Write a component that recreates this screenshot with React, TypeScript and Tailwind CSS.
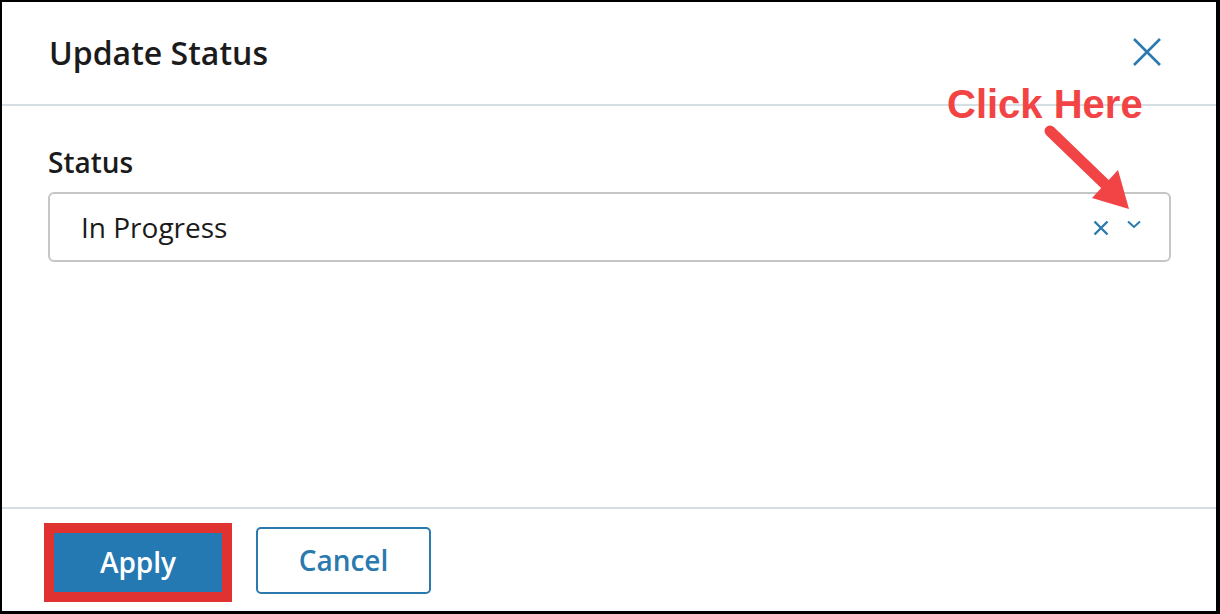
import React from 'react';

const font = { fontFamily: '"Open Sans", "Noto Sans", sans-serif' };

const Annotation: React.FC = () => (
  <div className="absolute left-0 top-0 w-[1220px] h-[614px] pointer-events-none">
    <span
      className="absolute left-[947px] top-[81px] text-[40px] leading-[46px] font-bold text-[#f24444]"
      style={{ fontFamily: '"Liberation Sans", Arial, sans-serif' }}
    >
      Click Here
    </span>
    <svg className="absolute left-0 top-0" width="1220" height="614">
      <line x1="1050" y1="131" x2="1108" y2="187" stroke="#f24444" strokeWidth="11" strokeLinecap="round" />
      <polygon points="1092,198 1118,170 1129,209" fill="#f24444" />
    </svg>
  </div>
);

export default function App() {
  return (
    <div className="relative w-[1220px] h-[614px] bg-white" style={font}>
      <div className="flex flex-col w-full h-full border-l-2 border-t-2 border-r-4 border-b-[3px] border-black">
        <div className="flex items-center justify-between h-[104px] pl-[47px] pr-[54px] border-b-2 border-[#d5dee2]">
          <h1 className="text-[32px] font-semibold text-[#1b1b1b] leading-none">Update Status</h1>
          <svg width="30" height="30" viewBox="0 0 30 30" className="-mt-[2px]">
            <path d="M2 2 L28 28 M28 2 L2 28" stroke="#2a7ab0" strokeWidth="2.6" />
          </svg>
        </div>
        <div className="flex-1 pl-[46px] pr-[45px] pt-[38px] border-b-2 border-[#d5dee2]">
          <label className="block text-[28px] font-semibold text-[#1b1b1b] leading-[36px]">Status</label>
          <div className="mt-[12px] flex items-center h-[70px] border-2 border-[#c6c6c6] rounded-[6px] pl-[31px] pr-[28px]">
            <span className="flex-1 text-[28px] text-[#1b1b1b]">In Progress</span>
            <svg width="16" height="16" viewBox="0 0 16 16" className="mr-[18px] mt-[1px]">
              <path d="M1.5 1.5 L14.5 14.5 M14.5 1.5 L1.5 14.5" stroke="#2a7ab0" strokeWidth="2.4" />
            </svg>
            <svg width="14" height="9" viewBox="0 0 14 9" className="-mt-[6px]">
              <path d="M1 1.5 L7 7 L13 1.5" stroke="#2a7ab0" strokeWidth="2" fill="none" />
            </svg>
          </div>
        </div>
        <div className="flex items-center h-[102px] pl-[42px] gap-[24px]">
          <div className="border-[10px] border-[#e03331] mt-[4px]">
            <button className="w-[168px] h-[59px] bg-[#2479b3] text-white text-[28px] font-semibold">Apply</button>
          </div>
          <button className="w-[175px] h-[67px] border-2 border-[#2a7ab0] rounded-[5px] bg-white text-[#2a7ab0] text-[28px] font-semibold">
            Cancel
          </button>
        </div>
      </div>
      <Annotation />
    </div>
  );
}
